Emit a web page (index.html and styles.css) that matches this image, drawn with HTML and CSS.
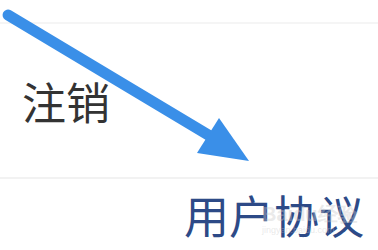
FILE: index.html
```html
<!DOCTYPE html>
<html lang="zh">
<head>
<meta charset="utf-8">
<link rel="stylesheet" href="styles.css">
</head>
<body>
<div class="page">
  <div class="top"></div>
  <div class="row row-logout"><span class="label">注销</span></div>
  <div class="row row-agreement"><span class="link">用户协议</span></div>
  <div class="watermark"><span class="wm-main">Bai<span class="wm-du">du</span>经验</span><span class="wm-sub">jingyan.baidu.com</span></div>
  <svg class="arrow" width="378" height="250" viewBox="0 0 378 250">
    <line x1="8" y1="15" x2="210" y2="136" stroke="#3a8fe8" stroke-width="11" stroke-linecap="round"/>
    <polygon points="219,118 197,153 249,161" fill="#3a8fe8"/>
  </svg>
</div>
</body>
</html>
```
FILE: styles.css
```css
html, body {
  margin: 0;
  padding: 0;
  background: #ffffff;
}
.page {
  position: relative;
  width: 378px;
  height: 250px;
  overflow: hidden;
  font-family: "Noto Sans CJK SC", "Noto Sans", sans-serif;
}
.top {
  height: 22px;
  border-bottom: 2px solid #f5f5f5;
}
.row {
  display: flex;
  align-items: center;
}
.row-logout {
  padding-left: 22px;
  border-bottom: 2px solid #f2f2f2;
  box-sizing: border-box;
  height: 155px;
}
.label {
  font-size: 44px;
  line-height: 1;
  color: #333333;
}
.row-agreement {
  height: 71px;
  justify-content: flex-end;
  padding-right: 14px;
}
.link {
  font-size: 45px;
  line-height: 1;
  color: #2d4a87;
}
.watermark {
  position: absolute;
  left: 262px;
  top: 203px;
  display: flex;
  flex-direction: column;
  color: rgba(200, 200, 200, 0.4);
  font-family: "Liberation Sans", sans-serif;
}
.wm-main {
  font-size: 20px;
  line-height: 22px;
  font-weight: bold;
}
.wm-sub {
  font-size: 9px;
  line-height: 10px;
}
.arrow {
  position: absolute;
  left: 0;
  top: 0;
}
```
